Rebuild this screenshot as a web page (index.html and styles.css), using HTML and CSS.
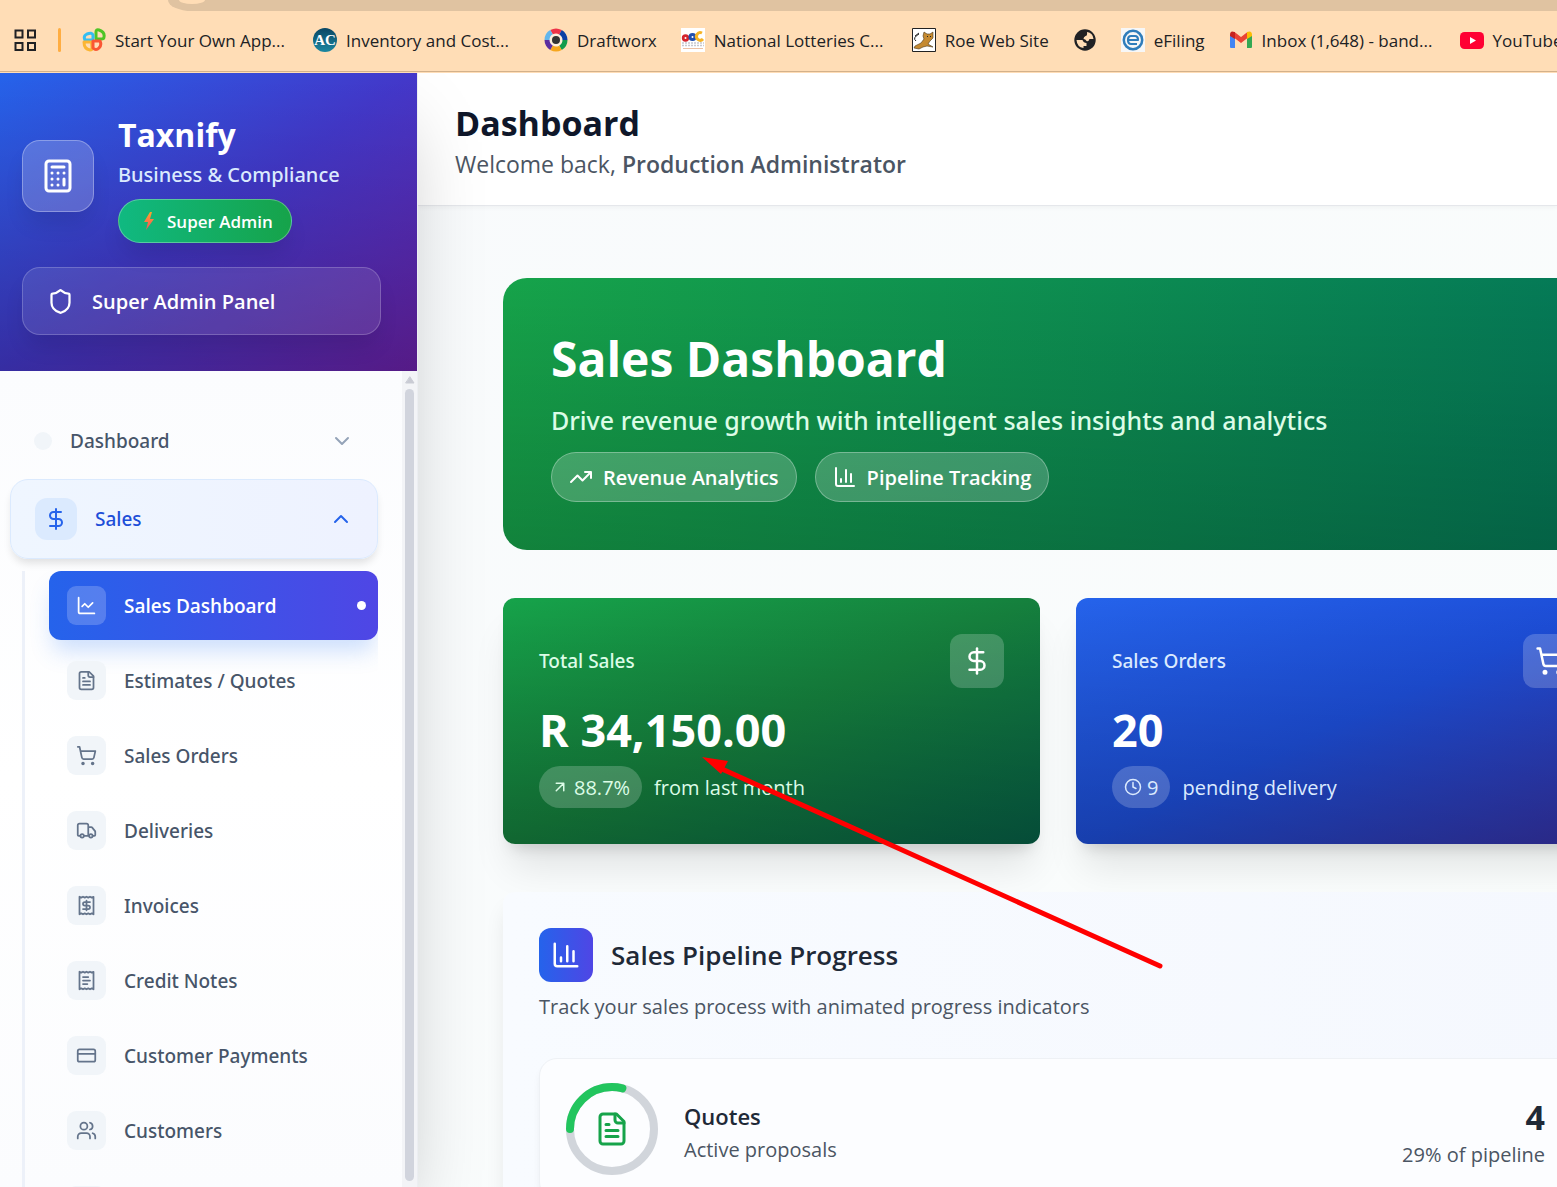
FILE: index.html
```html
<!DOCTYPE html>
<html lang="en">
<head>
<meta charset="utf-8">
<meta name="viewport" content="width=device-width, initial-scale=1">
<title>Taxnify – Sales Dashboard</title>
<link rel="stylesheet" href="styles.css">
</head>
<body>
<svg class="sprite" aria-hidden="true">
  <symbol id="dollar" viewBox="0 0 24 24"><path d="M12 2v20"/><path d="M17 5H9.500a3.500 3.500 0 0 0 0 7h5a3.500 3.500 0 0 1 0 7H6"/></symbol>
  <symbol id="cart" viewBox="0 0 24 24"><circle cx="8" cy="21" r="1"/><circle cx="19" cy="21" r="1"/><path d="M2.050 2.050h2l2.660 12.420a2 2 0 0 0 2 1.580h9.780a2 2 0 0 0 1.950-1.570l1.650-7.430H5.120"/></symbol>
  <symbol id="file" viewBox="0 0 24 24"><path d="M15 2H6a2 2 0 0 0-2 2v16a2 2 0 0 0 2 2h12a2 2 0 0 0 2-2V7Z"/><path d="M14 2v4a2 2 0 0 0 2 2h4M10 9H8M16 13H8M16 17H8"/></symbol>
  <symbol id="bars" viewBox="0 0 24 24"><path d="M3 3v16a2 2 0 0 0 2 2h16M18 17V9M13 17V5M8 17v-3"/></symbol>
  <symbol id="chart-line" viewBox="0 0 24 24"><path d="M3 3v16a2 2 0 0 0 2 2h16M19 9l-5 5-4-4-3 3"/></symbol>
  <symbol id="truck" viewBox="0 0 24 24"><path d="M14 18V6a2 2 0 0 0-2-2H4a2 2 0 0 0-2 2v11a1 1 0 0 0 1 1h2M15 18H9M19 18h2a1 1 0 0 0 1-1v-3.650a1 1 0 0 0-.220-.624l-3.480-4.350A1 1 0 0 0 17.520 8H14"/><circle cx="17" cy="18" r="2"/><circle cx="7" cy="18" r="2"/></symbol>
  <symbol id="receipt" viewBox="0 0 24 24"><path d="M4 2v20l2-1 2 1 2-1 2 1 2-1 2 1 2-1 2 1V2l-2 1-2-1-2 1-2-1-2 1-2-1-2 1Z"/><path d="M16 8h-6a2 2 0 1 0 0 4h4a2 2 0 1 1 0 4H8M12 17.500v-11"/></symbol>
  <symbol id="receipt-text" viewBox="0 0 24 24"><path d="M4 2v20l2-1 2 1 2-1 2 1 2-1 2 1 2-1 2 1V2l-2 1-2-1-2 1-2-1-2 1-2-1-2 1Z"/><path d="M14 8H8M16 12H8M13 16H8"/></symbol>
  <symbol id="card" viewBox="0 0 24 24"><rect x="2" y="5" width="20" height="14" rx="2"/><path d="M2 10h20"/></symbol>
  <symbol id="users" viewBox="0 0 24 24"><path d="M16 21v-2a4 4 0 0 0-4-4H6a4 4 0 0 0-4 4v2"/><circle cx="9" cy="7" r="4"/><path d="M22 21v-2a4 4 0 0 0-3-3.870M16 3.130a4 4 0 0 1 0 7.750"/></symbol>
  <symbol id="calculator" viewBox="0 0 24 24"><rect x="4" y="2" width="16" height="20" rx="2"/><path d="M8 6h8M16 14v4M16 10h.010M12 10h.010M8 10h.010M12 14h.010M8 14h.010M12 18h.010M8 18h.010"/></symbol>
  <symbol id="shield" viewBox="0 0 24 24"><path d="M20 13c0 5-3.500 7.500-7.660 8.950a1 1 0 0 1-.670-.010C7.500 20.500 4 18 4 13V6a1 1 0 0 1 1-1c2 0 4.500-1.200 6.240-2.720a1.170 1.170 0 0 1 1.520 0C14.510 3.810 17 5 19 5a1 1 0 0 1 1 1z"/></symbol>
  <symbol id="trend" viewBox="0 0 24 24"><path d="M22 7l-8.500 8.500-5-5L2 17M16 7h6v6"/></symbol>
  <symbol id="arrow-ur" viewBox="0 0 24 24"><path d="M7 7h10v10M7 17L17 7"/></symbol>
  <symbol id="clock" viewBox="0 0 24 24"><circle cx="12" cy="12" r="10"/><path d="M12 6v6l4 2"/></symbol>
  <symbol id="chev-down" viewBox="0 0 24 24"><path d="M6 9l6 6 6-6"/></symbol>
  <symbol id="chev-up" viewBox="0 0 24 24"><path d="M18 15l-6-6-6 6"/></symbol>
</svg>

<header class="browser">
  <div class="address"><span class="address-dot"></span></div>
  <nav class="bookmarks" aria-label="Bookmarks">
    <button class="apps" type="button" aria-label="Apps"><svg viewBox="0 0 24 24"><path d="M2.500 2.500h7v7h-7zM15 2.500h7v7h-7zM2.500 15h7v7h-7zM15 15h7v7h-7z"/></svg></button>
    <span class="divider"></span>
    <a class="bookmark clipped" href="#"><svg class="favicon" viewBox="0 0 24 24"><g stroke-width="3"><path d="M14 10V4q0-3 3-2 6 2 5 7 0 2-3 2h-4q-1 0-1-1z" stroke="#4fc425"/><path d="M10 12H3Q1 8 5 6q5-2 6 1v4z" stroke="#35bdf2"/><path d="M9.500 14H2q0 7 6 8 2 0 2-2z" stroke="#fbb533"/><path d="M11 13h7q2 4-1 7-3 3-6 0z" stroke="#fa5633"/></g></svg><span>Start Your Own App...</span></a>
    <a class="bookmark clipped" href="#"><span class="favicon ac">AC</span><span>Inventory and Cost...</span></a>
    <a class="bookmark" href="#"><svg class="favicon" viewBox="0 0 24 24"><circle cx="12" cy="12" r="7" fill="#ffeedb"/><g transform="rotate(-120 12 12)" stroke-width="5"><circle cx="12" cy="12" r="9" stroke="#ee3348" pathLength="60" stroke-dasharray="10 50"/><circle cx="12" cy="12" r="9" stroke="#0b3fa5" pathLength="60" stroke-dasharray="10 50" stroke-dashoffset="-10"/><circle cx="12" cy="12" r="9" stroke="#119c4c" pathLength="60" stroke-dasharray="10 50" stroke-dashoffset="-20"/><circle cx="12" cy="12" r="9" stroke="#f6a61d" pathLength="60" stroke-dasharray="10 50" stroke-dashoffset="-30"/><circle cx="12" cy="12" r="9" stroke="#5b2da0" pathLength="60" stroke-dasharray="10 50" stroke-dashoffset="-40"/><circle cx="12" cy="12" r="9" stroke="#62b6ec" pathLength="60" stroke-dasharray="10 50" stroke-dashoffset="-50"/></g><circle cx="12" cy="12" r="4" fill="#333"/></svg><span>Draftworx</span></a>
    <a class="bookmark clipped" href="#"><svg class="favicon" viewBox="0 0 24 24"><path fill="#fff" d="M0 0h24v24H0z"/><circle cx="4.500" cy="10" r="3.700" fill="#d5242c"/><circle cx="4.500" cy="10" r="1" fill="#fff"/><circle cx="11.500" cy="9" r="4" fill="#1f4fae"/><circle cx="11.500" cy="9" r="1" fill="#fff"/><path d="M21 5a3.800 3.800 0 1 0 1 6" stroke="#f5b324" stroke-width="3"/><path d="M1 15h22M1 17.500h22" stroke="#c6c8ce" stroke-width="1.500" stroke-dasharray="2 1"/><path d="M2 20.500h20" stroke="#edc0a2" stroke-width="1"/></svg><span>National Lotteries C...</span></a>
    <a class="bookmark" href="#"><svg class="favicon" viewBox="0 0 24 24"><path d="M.500.500h23v23H.500z" fill="#fff" stroke="#222" stroke-width="1"/><path d="M11 8l1-4 3 2h3l3-2v6l-3 3-2 3 5 3-6-1-4 1-4 2-5-1 1-2 6-3 3-4z" fill="#c58a31" stroke="#4b3717" stroke-width=".600"/><path d="M3 8l4-3M4 13q-4-3 3-7M15 8.500h1M18 8.500h1" stroke="#222" stroke-width="1"/></svg><span>Roe Web Site</span></a>
    <a class="bookmark" href="#" aria-label="Website"><svg class="favicon" viewBox="0 0 24 24"><circle cx="12" cy="12" r="10.700" fill="#202124"/><path d="M3.500 12h6q1 3 4 3v3h-3v2Q4 19 3.500 12zM14 4q6 1 6.500 7h-4q-1 3-3 2-1-2-3-2 0-2 2-3 2 0 1.500-4z" fill="#ffddb6"/></svg></a>
    <a class="bookmark" href="#"><svg class="favicon" viewBox="0 0 24 24"><path fill="#f7f7f7" d="M0 0h24v24H0z"/><circle cx="12" cy="12" r="9.200" stroke="#2f7dbb" stroke-width="2.500"/><path d="M7 12h10q0-4-3-4h-4q-3 0-3 4t3 4h6" stroke="#2f7dbb" stroke-width="2.200"/></svg><span>eFiling</span></a>
    <a class="bookmark clipped" href="#"><svg class="favicon" viewBox="0 0 24 24"><path d="M1 7h5v13H2q-1 0-1-1z" fill="#4285f4"/><path d="M18 7h5v12q0 1-1 1h-4z" fill="#34a853"/><path d="M5.500 4L12 9l6.500-5v6L12 15 5.500 10z" fill="#ea4335"/><path d="M1 7q0-5 4.500-3H6v7L1 8z" fill="#c5221f"/><path d="M18 4q5-2 5 3v1l-5 3z" fill="#fbbc04"/></svg><span>Inbox (1,648) - band...</span></a>
    <a class="bookmark" href="#"><svg class="favicon" viewBox="0 0 24 24"><rect y="4" width="24" height="17" rx="4.500" fill="#ff0033"/><path d="M10 9v7l6-3.500z" fill="#fff"/></svg><span>YouTube</span></a>
  </nav>
</header>

<div class="app">
  <aside class="sidebar">
    <div class="brand">
      <div class="brand-row">
        <span class="brand-icon"><svg class="i36"><use href="#calculator"/></svg></span>
        <div class="brand-text">
          <strong class="brand-name">Taxnify</strong>
          <span class="brand-tag">Business &amp; Compliance</span>
          <span class="role"><svg class="bolt" viewBox="0 0 12 18"><defs><linearGradient id="bolt" x1="0" y1="0" x2="0" y2="1"><stop offset="0" stop-color="#ffa32b"/><stop offset="1" stop-color="#f4515f"/></linearGradient></defs><path d="M7 0L1 10h4l-2 8 8-11H7l2-7z" fill="url(#bolt)"/></svg>Super Admin</span>
        </div>
      </div>
      <button class="panel-btn" type="button"><svg class="i27"><use href="#shield"/></svg>Super Admin Panel</button>
    </div>
    <div class="side-body">
      <nav class="menu" aria-label="Main">
        <button class="group" type="button"><span class="group-dot"></span><span class="grow">Dashboard</span><svg class="i24"><use href="#chev-down"/></svg></button>
        <button class="group open" type="button"><span class="group-icon"><svg class="i24"><use href="#dollar"/></svg></span><span class="grow">Sales</span><svg class="i24"><use href="#chev-up"/></svg></button>
        <div class="submenu">
          <a class="item active" href="#"><span class="item-icon"><svg class="i21"><use href="#chart-line"/></svg></span><span class="grow">Sales Dashboard</span><span class="now"></span></a>
          <a class="item" href="#"><span class="item-icon"><svg class="i21"><use href="#file"/></svg></span>Estimates / Quotes</a>
          <a class="item" href="#"><span class="item-icon"><svg class="i21"><use href="#cart"/></svg></span>Sales Orders</a>
          <a class="item" href="#"><span class="item-icon"><svg class="i21"><use href="#truck"/></svg></span>Deliveries</a>
          <a class="item" href="#"><span class="item-icon"><svg class="i21"><use href="#receipt"/></svg></span>Invoices</a>
          <a class="item" href="#"><span class="item-icon"><svg class="i21"><use href="#receipt-text"/></svg></span>Credit Notes</a>
          <a class="item" href="#"><span class="item-icon"><svg class="i21"><use href="#card"/></svg></span>Customer Payments</a>
          <a class="item" href="#"><span class="item-icon"><svg class="i21"><use href="#users"/></svg></span>Customers</a>
          <a class="item" href="#" aria-label="More"><span class="item-icon"></span></a>
        </div>
      </nav>
      <div class="scrollbar"><svg class="scroll-up" viewBox="0 0 10 8"><path d="M5 1l4 6H1z" fill="#c9cbd4" stroke="#c9cbd4" stroke-width="1"/></svg><span class="thumb"></span></div>
    </div>
  </aside>

  <div class="main">
    <header class="topbar">
      <h1>Dashboard</h1>
      <p>Welcome back, <b>Production Administrator</b></p>
    </header>
    <main class="content">
      <section class="hero">
        <h2>Sales Dashboard</h2>
        <p>Drive revenue growth with intelligent sales insights and analytics</p>
        <div class="chips">
          <span class="chip"><svg class="i24"><use href="#trend"/></svg>Revenue Analytics</span>
          <span class="chip"><svg class="i24"><use href="#bars"/></svg>Pipeline Tracking</span>
        </div>
      </section>
      <div class="stats">
        <article class="stat green">
          <div class="stat-head"><h3>Total Sales</h3><span class="stat-icon"><svg class="i30"><use href="#dollar"/></svg></span></div>
          <p class="value">R 34,150.00</p>
          <p class="foot"><span class="pill"><svg class="i18"><use href="#arrow-ur"/></svg>88.7%</span>from last month</p>
        </article>
        <article class="stat blue">
          <div class="stat-head"><h3>Sales Orders</h3><span class="stat-icon"><svg class="i30"><use href="#cart"/></svg></span></div>
          <p class="value">20</p>
          <p class="foot"><span class="pill"><svg class="i18"><use href="#clock"/></svg>9</span>pending delivery</p>
        </article>
      </div>
      <section class="pipeline">
        <div class="pipeline-head"><span class="pipeline-icon"><svg class="i30"><use href="#bars"/></svg></span><h3>Sales Pipeline Progress</h3></div>
        <p class="pipeline-sub">Track your sales process with animated progress indicators</p>
        <div class="stage">
          <div class="ring">
            <svg viewBox="0 0 92 92"><circle cx="46" cy="46" r="42" stroke="#d1d5db"/><circle class="arc" cx="46" cy="46" r="42" pathLength="100" stroke-dasharray="29 71"/></svg>
            <svg class="ring-icon"><use href="#file"/></svg>
          </div>
          <div class="stage-text"><h4>Quotes</h4><p>Active proposals</p></div>
          <div class="stage-num"><strong>4</strong><p>29% of pipeline</p></div>
        </div>
      </section>
    </main>
  </div>
</div>

<svg class="pointer" viewBox="0 0 470 220" aria-hidden="true"><path d="M22 14L460 211" stroke="#f00" stroke-width="5"/><path d="M2 2l26 4-7 13z" fill="#f00" stroke="none"/></svg>
</body>
</html>
```
FILE: styles.css
```css
* { box-sizing: border-box; margin: 0; }
body {
  height: 100vh;
  display: flex;
  flex-direction: column;
  overflow: hidden;
  position: relative;
  font-family: "Open Sans", "Noto Sans", sans-serif;
  font-size: 19px;
  color: #1f2937;
}
a { color: inherit; text-decoration: none; }
button { font: inherit; color: inherit; border: 0; background: none; padding: 0; text-align: left; }
svg { fill: none; stroke: currentColor; stroke-width: 2; stroke-linecap: round; stroke-linejoin: round; flex: none; display: block; }
.sprite { display: none; }
.i18 { width: 18px; height: 18px; }
.i21 { width: 21px; height: 21px; }
.i24 { width: 24px; height: 24px; }
.i27 { width: 27px; height: 27px; }
.i30 { width: 30px; height: 30px; }
.i36 { width: 36px; height: 36px; }
.grow { flex: 1; }

/* Browser chrome */
.browser { flex: none; height: 73px; background: #ffddb6; overflow: hidden; }
.address { height: 11px; margin-left: 168px; background: #e0c3a1; border-bottom-left-radius: 24px 11px; }
.address-dot { display: block; width: 26px; height: 4px; margin-left: 11px; background: #ffddb6; border-radius: 0 0 13px 13px / 0 0 4px 4px; }
.bookmarks { height: 61px; display: flex; align-items: center; gap: 24px; padding: 0 0 2px 13px; border-bottom: 1px solid #d3b18b; white-space: nowrap; font-size: 17px; color: #202124; }
.apps { flex: none; width: 24px; height: 24px; margin-right: -3px; }
.apps svg { stroke-width: 2; stroke-linejoin: miter; }
.divider { flex: none; width: 3px; height: 24px; background: #ffad42; border-radius: 2px; margin-right: -3px; }
.bookmark { display: flex; align-items: center; gap: 9px; flex: none; }
.clipped { width: 207px; }
.favicon { width: 24px; height: 24px; stroke: none; stroke-linecap: butt; flex: none; }
.ac { border-radius: 50%; background: linear-gradient(#0a4764, #1b87a0); color: #fff; font: bold 15px/24px "Liberation Serif", serif; text-align: center; }

.app { flex: 1; display: flex; min-height: 0; background: linear-gradient(135deg, #f8fafc, #fafdfc); }

/* Sidebar */
.sidebar { width: 418px; flex: none; display: flex; flex-direction: column; border-right: 1px solid #eceef2; background: #fdfeff; box-shadow: 0 38px 75px -18px rgba(0, 0, 0, .25); position: relative; z-index: 1; clip-path: inset(0 -100px 0 0); }
.brand { padding: 36px 36px 36px 22px; color: #fff; background: linear-gradient(to top, rgba(0, 0, 0, .2), transparent), linear-gradient(to bottom right, #2563eb, #4338ca, #6b21a8); }
.brand-row { display: flex; align-items: center; gap: 24px; margin-bottom: 24px; }
.brand-icon { width: 72px; height: 72px; display: grid; place-items: center; border-radius: 18px; background: rgba(255, 255, 255, .2); border: 1px solid rgba(255, 255, 255, .3); box-shadow: 0 15px 22px -4px rgba(0, 0, 0, .1); }
.brand-text { display: flex; flex-direction: column; align-items: flex-start; }
.brand-name { font-size: 32px; line-height: 52px; }
.brand-tag { font-family: "Noto Sans", sans-serif; font-size: 20px; line-height: 28px; font-weight: 500; color: #dbeafe; margin-bottom: 10px; }
.role { display: flex; align-items: center; gap: 12px; height: 44px; padding: 0 18px 0 24px; border-radius: 22px; border: 1px solid rgba(255, 255, 255, .3); background: linear-gradient(to right, #10b981, #16a34a); font-size: 17px; font-weight: 600; box-shadow: 0 15px 22px -4px rgba(0, 0, 0, .1); }
.bolt { width: 12px; height: 18px; stroke: none; }
.panel-btn { display: flex; align-items: center; gap: 18px; width: 100%; height: 68px; padding-left: 24px; border-radius: 18px; border: 1px solid rgba(255, 255, 255, .2); background: rgba(255, 255, 255, .1); font-size: 20px; font-weight: 600; box-shadow: 0 15px 22px -4px rgba(0, 0, 0, .1); }
.side-body { flex: 1; min-height: 0; display: flex; overflow: hidden; background: linear-gradient(#fbfcfe, #fff 50%, #fbfcfe); }
.menu { flex: 1; padding: 36px 24px 0 10px; font-family: "Noto Sans", sans-serif; font-weight: 500; color: #475569; }
.group { display: flex; align-items: center; gap: 18px; width: 100%; height: 67px; padding: 0 24px; margin-bottom: 5px; font-weight: 500; }
.group > svg:last-child { color: #94a3b8; }
.group-dot { width: 18px; height: 18px; border-radius: 50%; background: #f1f5f9; }
.group.open { height: 80px; margin-bottom: 12px; border: 1px solid #dbeafe; border-radius: 18px; background: linear-gradient(to right, #eff6ff, #eef2ff); color: #1d4ed8; box-shadow: 0 6px 9px -2px rgba(0, 0, 0, .12); }
.group.open > svg:last-child { color: #2563eb; }
.group-icon { width: 42px; height: 42px; display: grid; place-items: center; border-radius: 12px; background: #dbeafe; color: #2563eb; }
.submenu { display: flex; flex-direction: column; gap: 6px; margin-left: 12px; padding-left: 24px; border-left: 3px solid #edf1f9; overflow: hidden; }
.item { display: flex; align-items: center; gap: 18px; height: 69px; flex: none; padding: 0 12px 0 18px; border-radius: 12px; }
.item-icon { width: 39px; height: 39px; display: grid; place-items: center; border-radius: 9px; background: #f1f5f9; color: #64748b; }
.item.active { color: #fff; font-family: "Open Sans", sans-serif; font-weight: 600; background: linear-gradient(to right, #2563eb, #4f46e5); box-shadow: 0 15px 22px -4px rgba(59, 130, 246, .25); }
.item.active .item-icon { background: rgba(255, 255, 255, .2); color: #fff; }
.now { width: 9px; height: 9px; border-radius: 50%; background: #fff; }
.scrollbar { width: 15px; display: flex; flex-direction: column; align-items: center; gap: 5px; padding: 5px 0 6px; background: #f3f4f7; }
.scroll-up { width: 10px; height: 8px; }
.thumb { flex: 1; width: 9px; border-radius: 5px; background: #d1d4dd; }

/* Main column */
.main { flex: 1; min-width: 0; overflow: hidden; }
.topbar { height: 133px; padding: 26px 37px; background: #fff; border-bottom: 1px solid #e5e7eb; box-shadow: 0 2px 4px rgba(0, 0, 0, .04); }
.topbar h1 { font-size: 34px; line-height: 48px; color: #0f172a; }
.topbar p { font-size: 23px; line-height: 34px; color: #4b5563; }
.topbar b { font-weight: 600; }
.content { display: flex; flex-direction: column; gap: 48px; padding: 72px 0 0 85px; min-width: 1195px; }
.hero { padding: 48px; border-radius: 24px; color: #fff; background: linear-gradient(to top, rgba(0, 0, 0, .2), transparent), linear-gradient(to right, #16a34a, #047857); }
.hero h2 { font-size: 48px; line-height: 66px; }
.hero p { font-family: "Noto Sans", sans-serif; font-size: 25px; line-height: 36px; font-weight: 500; color: #dcfce7; margin: 10px 0 14px; }
.chips { display: flex; gap: 18px; }
.chip { display: flex; align-items: center; gap: 10px; height: 50px; padding: 0 17px; border-radius: 25px; border: 1px solid rgba(255, 255, 255, .3); background: rgba(255, 255, 255, .2); font-size: 20px; font-weight: 600; }
.stats { display: grid; grid-template-columns: 1fr 1fr; gap: 36px; }
.stat { padding: 36px; border-radius: 12px; color: #fff; box-shadow: 0 30px 38px -8px rgba(0, 0, 0, .1), 0 12px 15px -9px rgba(0, 0, 0, .15); }
.green { background: linear-gradient(to top, rgba(0, 0, 0, .2), transparent), linear-gradient(to bottom right, #16a34a, #15803d, #065f46); }
.blue { background: linear-gradient(to top, rgba(0, 0, 0, .2), transparent), linear-gradient(to bottom right, #2563eb, #1d4ed8, #3730a3); }
.green h3, .green .foot { color: #dcfce7; }
.blue h3, .blue .foot { color: #dbeafe; }
.stat-head { display: flex; align-items: center; justify-content: space-between; }
.stat h3 { font-family: "Noto Sans", sans-serif; font-size: 19px; font-weight: 500; }
.stat-icon { width: 54px; height: 54px; display: grid; place-items: center; border-radius: 12px; background: rgba(255, 255, 255, .2); color: #fff; }
.value { margin: 15px 0 9px; font-size: 45px; line-height: 54px; font-weight: 700; }
.foot { display: flex; align-items: center; gap: 12px; font-size: 20px; }
.pill { display: flex; align-items: center; gap: 5px; height: 42px; padding: 0 12px; border-radius: 21px; background: rgba(255, 255, 255, .2); }
.pipeline { min-height: 400px; padding: 36px; border-radius: 12px; background: linear-gradient(to right, #f8fbff, #f5f8fe); box-shadow: 0 15px 22px -4px rgba(0, 0, 0, .1); position: relative; }
.pipeline-head { display: flex; align-items: center; gap: 18px; }
.pipeline-icon { width: 54px; height: 54px; display: grid; place-items: center; border-radius: 12px; background: linear-gradient(to right, #2563eb, #4f46e5); color: #fff; }
.pipeline h3 { font-size: 26px; font-weight: 600; }
.pipeline-sub { margin: 10px 0 36px; font-size: 20px; line-height: 30px; color: #4b5563; }
.stage { display: flex; align-items: center; gap: 26px; padding: 24px 31px 24px 26px; border: 1px solid #eef1f5; border-radius: 18px; background: #fcfdff; box-shadow: 0 6px 9px -2px rgba(0, 0, 0, .08); }
.ring { width: 92px; height: 92px; display: grid; place-items: center; }
.ring > svg { grid-area: 1 / 1; stroke-width: 8; }
.arc { stroke: #22c55e; transform: rotate(180deg); transform-origin: center; }
.ring > .ring-icon { width: 36px; height: 36px; stroke-width: 2; color: #16a34a; }
.stage-text { flex: 1; padding-top: 8px; }
.stage h4 { font-size: 22px; line-height: 33px; font-weight: 600; }
.stage p { font-size: 20px; line-height: 33px; color: #4b5563; }
.stage-num { text-align: right; padding-top: 8px; }
.stage-num strong { display: block; font-size: 34px; line-height: 42px; }

/* Annotation arrow laid over the page */
.pointer { position: absolute; left: 700px; top: 755px; width: 470px; height: 220px; z-index: 2; }
```
